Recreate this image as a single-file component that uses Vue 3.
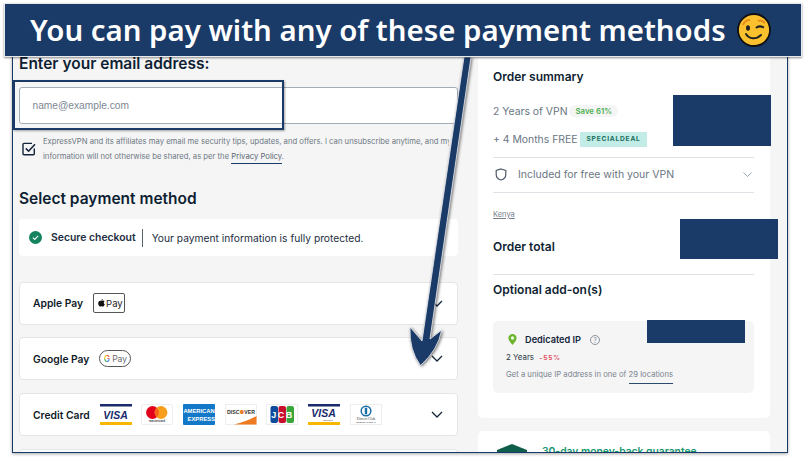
<template>
  <div class="page">
    <div class="frame">
      <div class="left">
        <h2 class="heading">Enter your email address:</h2>
        <div class="email-input">name@example.com</div>
        <div class="consent">
          <svg class="check" width="14" height="14" viewBox="0 0 14 14" fill="none">
            <path d="M12.3 6.5v5.2a1 1 0 0 1-1 1H2a1 1 0 0 1-1-1V2.4a1 1 0 0 1 1-1h8" stroke="#14243a" stroke-width="1.4" />
            <path d="M3.8 6.4l2.8 2.8 6.4-7" stroke="#14243a" stroke-width="1.6" />
          </svg>
          <div class="consent-text">
            <p>ExpressVPN and its affiliates may email me security tips, updates, and offers. I can unsubscribe anytime, and my</p>
            <p>information will not otherwise be shared, as per the <span class="link">Privacy Policy</span>.</p>
          </div>
        </div>
        <h2 class="heading select-title">Select payment method</h2>
        <div class="secure">
          <svg width="13" height="13" viewBox="0 0 13 13">
            <circle cx="6.5" cy="6.5" r="6.5" fill="#13845f" />
            <path d="M3.8 6.7l1.9 1.8 3.5-3.6" fill="none" stroke="#fff" stroke-width="1.1" />
          </svg>
          <strong>Secure checkout</strong>
          <span class="bar"></span>
          <span>Your payment information is fully protected.</span>
        </div>

        <div class="method first">
          <span class="method-name">Apple Pay</span>
          <span class="apple-badge">
            <svg width="7" height="8" viewBox="0 0 7 8"><path d="M3.5 1.900C4 1.900 4.600 1.500 5.200 1.600 5.800 1.700 6.200 2 6.500 2.400 5.400 3.100 5.600 4.700 6.800 5.200 6.400 6.300 5.700 7.600 4.900 7.600 4.300 7.600 4.100 7.300 3.500 7.300 2.900 7.300 2.700 7.600 2.100 7.600 1.200 7.600.2 5.700.2 4.200.2 2.700 1.200 1.700 2.200 1.700 2.700 1.700 3.100 1.900 3.500 1.900ZM3.400 1.600C3.300.8 4 .1 4.800 0 4.900.9 4.200 1.600 3.400 1.600Z" fill="#111" /></svg>
            Pay
          </span>
          <svg class="chev" width="12" height="7" viewBox="0 0 12 7"><path d="M1 1l5 5 5-5" /></svg>
        </div>

        <div class="method">
          <span class="method-name google-name">Google Pay</span>
          <span class="google-badge">
            <b class="g-blue">G</b> Pay
          </span>
          <svg class="chev" width="12" height="7" viewBox="0 0 12 7"><path d="M1 1l5 5 5-5" /></svg>
        </div>

        <div class="method">
          <span class="method-name">Credit Card</span>
          <div class="cards">
            <svg class="pay-card" viewBox="0 0 32 21">
              <rect width="32" height="21" fill="#fff" />
              <rect width="32" height="2.500" fill="#1a2a6c" />
              <rect y="18" width="32" height="3" fill="#f7b600" />
              <text x="15.500" y="14.500" class="visa">VISA</text>
            </svg>
            <svg class="pay-card" viewBox="0 0 32 21">
              <rect x=".5" y=".5" width="31" height="20" rx="1" fill="#fff" stroke="#eee" />
              <circle cx="11.500" cy="8.500" r="6.400" fill="#e3001b" />
              <circle cx="20" cy="8.500" r="6.400" fill="#f79e1b" />
              <path d="M15.750 3.700a6.400 6.400 0 0 1 0 9.600a6.400 6.400 0 0 1 0-9.600z" fill="#f4641c" />
              <text x="16" y="18" class="tiny mc">mastercard</text>
            </svg>
            <svg class="pay-card" viewBox="0 0 32 21">
              <rect width="32" height="21" rx="1" fill="#1478c8" />
              <text x="16" y="8.500" class="amex">AMERICAN</text>
              <text x="32" y="16.500" class="amex amex-end">EXPRESS</text>
            </svg>
            <svg class="pay-card" viewBox="0 0 32 21">
              <rect x=".5" y=".5" width="31" height="20" fill="#fff" stroke="#eee" />
              <path d="M9 20.500C18 18.500 26 15 31.500 12V20.500Z" fill="#ee7a22" />
              <text x="16" y="10" class="disc">DISC<tspan fill="#ee7a22">●</tspan>VER</text>
            </svg>
            <svg class="pay-card" viewBox="0 0 32 21">
              <rect x=".5" y=".5" width="31" height="20" fill="#fff" stroke="#eee" />
              <rect x="4.500" y="2" width="7.500" height="17" rx="2" fill="#0d4c9c" />
              <rect x="12.500" y="2" width="7.500" height="17" rx="2" fill="#c8102e" />
              <rect x="20.500" y="2" width="7.500" height="17" rx="2" fill="#3aa53a" />
              <text x="16.500" y="14" class="jcb">JCB</text>
            </svg>
            <svg class="pay-card" viewBox="0 0 32 21">
              <rect width="32" height="21" fill="#fff" />
              <rect width="32" height="2.500" fill="#1a2a6c" />
              <rect y="18" width="32" height="3" fill="#f7b600" />
              <text x="15.500" y="13" class="visa">VISA</text>
              <text x="20" y="16.500" class="tiny">Electron</text>
            </svg>
            <svg class="pay-card" viewBox="0 0 32 21">
              <rect x=".5" y=".5" width="31" height="20" fill="#fff" stroke="#eee" />
              <circle cx="16" cy="7" r="4.800" fill="none" stroke="#1b6ea8" stroke-width="1.500" />
              <rect x="14.800" y="3.800" width="2.400" height="6.400" fill="#1b6ea8" />
              <text x="16" y="15.500" class="diners">Diners Club</text>
              <text x="16" y="18.500" class="tiny">INTERNATIONAL</text>
            </svg>
          </div>
          <svg class="chev" width="12" height="7" viewBox="0 0 12 7"><path d="M1 1l5 5 5-5" /></svg>
        </div>

        <div class="method"></div>
      </div>

      <div class="right">
        <div class="summary">
          <h3 class="summary-title">Order summary</h3>
          <div class="line line-first">
            2 Years of VPN
            <span class="save">Save 61%</span>
          </div>
          <div class="line line-second">
            + 4 Months FREE
            <span class="deal">SPECIALDEAL</span>
          </div>
          <div class="included">
            <svg width="12" height="13" viewBox="0 0 12 13" fill="none"><path d="M6 1l4.800 1.500v4C10.800 9.500 8.500 11.300 6 12 3.500 11.300 1.200 9.500 1.200 6.500v-4z" stroke="#4e5a68" stroke-width="1.200" /></svg>
            <span>Included for free with your VPN</span>
            <svg class="chev-light" width="9" height="5" viewBox="0 0 9 5"><path d="M.5.5l4 4 4-4" /></svg>
          </div>
          <div class="country">Kenya</div>
          <h3 class="summary-title total">Order total</h3>
          <h3 class="summary-title addons">Optional add-on(s)</h3>
          <div class="addon">
            <div class="addon-head">
              <svg width="9" height="11" viewBox="0 0 9 11">
                <path d="M4.500 0C6.900 0 8.600 1.800 8.600 4 8.600 6.700 6 9 4.500 11 3 9 .4 6.700.4 4 .4 1.800 2.100 0 4.500 0Z" fill="#6db52e" />
                <circle cx="4.500" cy="4" r="1.700" fill="#e9f5dc" />
              </svg>
              <strong>Dedicated IP</strong>
              <span class="help">?</span>
            </div>
            <div class="addon-term">2 Years <span class="off">-55%</span></div>
            <div class="addon-note">Get a unique IP address in one of <span class="locations">29 locations</span></div>
          </div>
        </div>
        <div class="guarantee">
          <svg width="30" height="20" viewBox="0 0 30 20"><path d="M15 0l15 6v14H0V6z" fill="#0f5e4c" /></svg>
          <span>30-day money-back guarantee</span>
        </div>
      </div>
    </div>

    <svg class="arrow" width="806" height="457" viewBox="0 0 806 457">
      <path d="M464 57L471 57L430 339L441.700 330Q438 350 420.500 365.500Q409 350 410 327L422 341Z" />
    </svg>

    <div class="focus-box"></div>
    <div class="redact redact-price"></div>
    <div class="redact redact-total"></div>
    <div class="redact redact-addon"></div>

    <div class="banner">
      <span>You can pay with any of these payment methods</span>
      <svg width="36" height="36" viewBox="0 0 36 36">
        <circle cx="18" cy="18" r="16" fill="#fbc02d" stroke="#111" stroke-width="1.800" />
        <path d="M7 13c1-3 4-5 7-5M22 9c2-1 5 0 7 2" fill="none" stroke="#e98e1c" stroke-width="2" />
        <ellipse cx="12" cy="16" rx="2" ry="2.800" fill="#222" />
        <path d="M20 16c2-2 5-2 8-.5" fill="none" stroke="#222" stroke-width="2" />
        <path d="M10 22c3 5 10 6 15 1" fill="none" stroke="#222" stroke-width="2" stroke-linecap="round" />
      </svg>
    </div>
  </div>
</template>

<script setup>
</script>

<style>
html, body { background: #fff; }
</style>

<style scoped>
* { box-sizing: border-box; margin: 0; padding: 0; font-family: Inter, 'Liberation Sans', sans-serif; }
.page { position: relative; width: 806px; height: 457px; overflow: hidden; background: #fff; }
.frame { display: flex; gap: 20px; width: 776px; height: 413px; margin: 40px 0 0 12px; padding-left: 6px; background: #f5f5f5; border: 1.5px solid #1a3a68; border-top: none; box-shadow: 0 1px 3px rgba(0,0,0,.35); overflow: hidden; }
.left { width: 439px; flex: none; padding-top: 14px; }
.heading { font-size: 15.500px; line-height: 20px; font-weight: 600; color: #0f1f33; }
.email-input { height: 37px; margin-top: 13px; padding-left: 12.500px; display: flex; align-items: center; background: #fff; border: 1px solid #a3adb8; border-radius: 3px; font-family: 'Liberation Sans', sans-serif; font-size: 10.200px; color: #7d8792; }
.consent { display: flex; margin-top: 10px; height: 30px; }
.check { flex: none; margin: 8px 7px 0 3px; }
.consent-text { min-width: 0; overflow: hidden; width: 406px; font-size: 7.700px; line-height: 15px; color: #6d7884; white-space: nowrap; }
.link { border-bottom: 1px solid #1a3a68; padding-bottom: 2px; color: #5a6672; }
.select-title { margin-top: 25px; }
.secure { display: flex; align-items: center; height: 37px; margin-top: 10px; padding-left: 10px; background: #fff; border-radius: 4px; font-size: 10.250px; color: #1d2d42; }
.secure strong { margin-left: 9px; font-weight: 600; font-size: 10.400px; }
.bar { width: 1px; height: 18px; margin: 0 9px 0 6px; background: #54616f; }
.method { display: flex; align-items: center; height: 43px; margin-top: 12.800px; padding-left: 13px; padding-right: 14px; background: #fff; border: 1px solid #e3e5e8; border-radius: 4px; }
.method.first { margin-top: 25.700px; }
.method-name { font-size: 10.300px; font-weight: 600; color: #0f1a28; margin-right: 10px; }
.google-name { margin-right: 10px; padding-top: 1px; }
.chev { margin-left: auto; fill: none; stroke: #14243a; stroke-width: 1.300px; }
.apple-badge { display: flex; align-items: center; gap: 1px; width: 32px; height: 20px; padding-left: 4px; border: 1px solid #555; border-radius: 2px; font-size: 9.500px; color: #222; }
.google-badge { display: flex; align-items: center; justify-content: center; gap: 2px; width: 32px; height: 17px; border: 1px solid #555; border-radius: 9px; font-size: 8.500px; color: #6a6a6a; }
.g-blue { font-weight: 600; background: conic-gradient(#ea4335 0 25%, #4285f4 25% 50%, #34a853 50% 75%, #fbbc05 75%); -webkit-background-clip: text; color: transparent; }
.cards { display: flex; gap: 9.700px; }
.pay-card { width: 32px; height: 21px; }
.visa { font: italic 800 10.500px 'Liberation Sans', sans-serif; fill: #1a2a6c; text-anchor: middle; }
.tiny { font: 2.500px 'Liberation Sans', sans-serif; fill: #444; text-anchor: middle; }
.mc { font-size: 3px; font-weight: 700; }
.amex { font: 700 5.800px 'Liberation Sans', sans-serif; fill: #fff; text-anchor: middle; }
.amex-end { text-anchor: end; }
.disc { font: 700 5.200px 'Liberation Sans', sans-serif; fill: #333; text-anchor: middle; }
.jcb { font: 800 9px 'Liberation Sans', sans-serif; fill: #fff; text-anchor: middle; letter-spacing: 1.500px; }
.diners { font: 3.800px 'Liberation Serif', serif; fill: #444; text-anchor: middle; }
.right { width: 292px; flex: none; }
.summary { height: 378px; padding: 27px 16px 0 15px; background: #fff; border-radius: 0 0 5px 5px; }
.summary-title { font-size: 12px; line-height: 20px; font-weight: 600; color: #0f1f33; }
.line { display: flex; align-items: center; height: 20px; font-size: 10.400px; color: #6a7682; }
.line-first { margin-top: 14px; }
.line-second { margin-top: 8px; }
.save { margin-left: 2px; padding: 0 6px; height: 12px; line-height: 12px; background: #f5f5f5; border-radius: 6px; font-size: 7.800px; font-weight: 600; color: #4caf50; }
.deal { margin-left: 3px; padding: 0 6px; height: 15px; line-height: 15px; background: #c3ece6; font-size: 6.600px; font-weight: 700; letter-spacing: .8px; color: #1a6e5c; }
.included { display: flex; align-items: center; height: 36px; margin-top: 8px; padding: 0 2px 2px; border-top: 1px solid #dfe3e7; border-bottom: 1px solid #dfe3e7; font-size: 10.500px; color: #6a7682; }
.included span { margin-left: 11px; }
.chev-light { margin-left: auto; fill: none; stroke: #8e98a3; stroke-width: .9px; }
.country { margin-top: 16px; height: 12px; line-height: 12px; font-size: 7.500px; color: #77818c; text-decoration: underline; }
.total { margin-top: 16px; padding-bottom: 17px; border-bottom: 1px solid #dfe3e7; height: 38px; }
.addons { margin-top: 5px; }
.addon { height: 72px; margin-top: 21px; padding: 11px 13px 0; background: #f5f5f5; border-radius: 5px; }
.addon-head { display: flex; align-items: center; height: 14px; padding-left: 2px; font-size: 9.200px; color: #14243a; }
.addon-head strong { margin-left: 8px; font-weight: 600; }
.help { display: flex; align-items: center; justify-content: center; width: 10px; height: 10px; margin: 2px 0 0 9px; border: 1px solid #8b949e; border-radius: 50%; font-size: 7px; color: #8b949e; }
.addon-term { margin-top: 4px; height: 14px; line-height: 14px; font-size: 7.900px; color: #2a3747; }
.off { margin-left: 3px; font-size: 6.600px; font-weight: 700; letter-spacing: .8px; color: #e2505c; }
.addon-note { margin-top: 4px; height: 14px; line-height: 14px; font-size: 7.700px; color: #7a848f; }
.locations { display: inline-block; border-bottom: 1px solid #2a4a6e; padding-bottom: 3px; line-height: 11px; }
.guarantee { display: flex; align-items: flex-start; gap: 15px; height: 60px; margin-top: 13px; padding: 13px 0 0 19px; background: #fff; border-radius: 5px 5px 0 0; font-size: 10.300px; line-height: 14px; font-weight: 600; color: #16966e; }
.arrow { position: absolute; inset: 0; pointer-events: none; filter: drop-shadow(1px 1px 1.500px rgba(0,0,0,.55)); }
.arrow path { fill: #1a3a68; stroke: #f2f3f5; stroke-width: .8px; }
.focus-box { position: absolute; left: 13px; top: 80px; width: 271px; height: 50px; border: 2.500px solid #1a3a68; box-shadow: 1px 1px 2px rgba(0,0,0,.35); }
.redact { position: absolute; background: #1a3a68; }
.redact-price { left: 673px; top: 95px; width: 98px; height: 51px; }
.redact-total { left: 680px; top: 219px; width: 98px; height: 40px; }
.redact-addon { left: 647px; top: 320px; width: 98px; height: 23px; }
.banner { position: absolute; left: 4px; top: 3px; width: 798px; height: 54px; display: flex; align-items: center; padding-left: 25px; background: #1a3a68; border: 1px solid #e6e9ee; box-shadow: 0 1px 2px rgba(0,0,0,.45); color: #fff; white-space: nowrap; }
.banner span { font-family: 'Noto Sans', sans-serif; font-size: 29.400px; font-weight: 600; }
.banner svg { margin-left: 10px; }
</style>
